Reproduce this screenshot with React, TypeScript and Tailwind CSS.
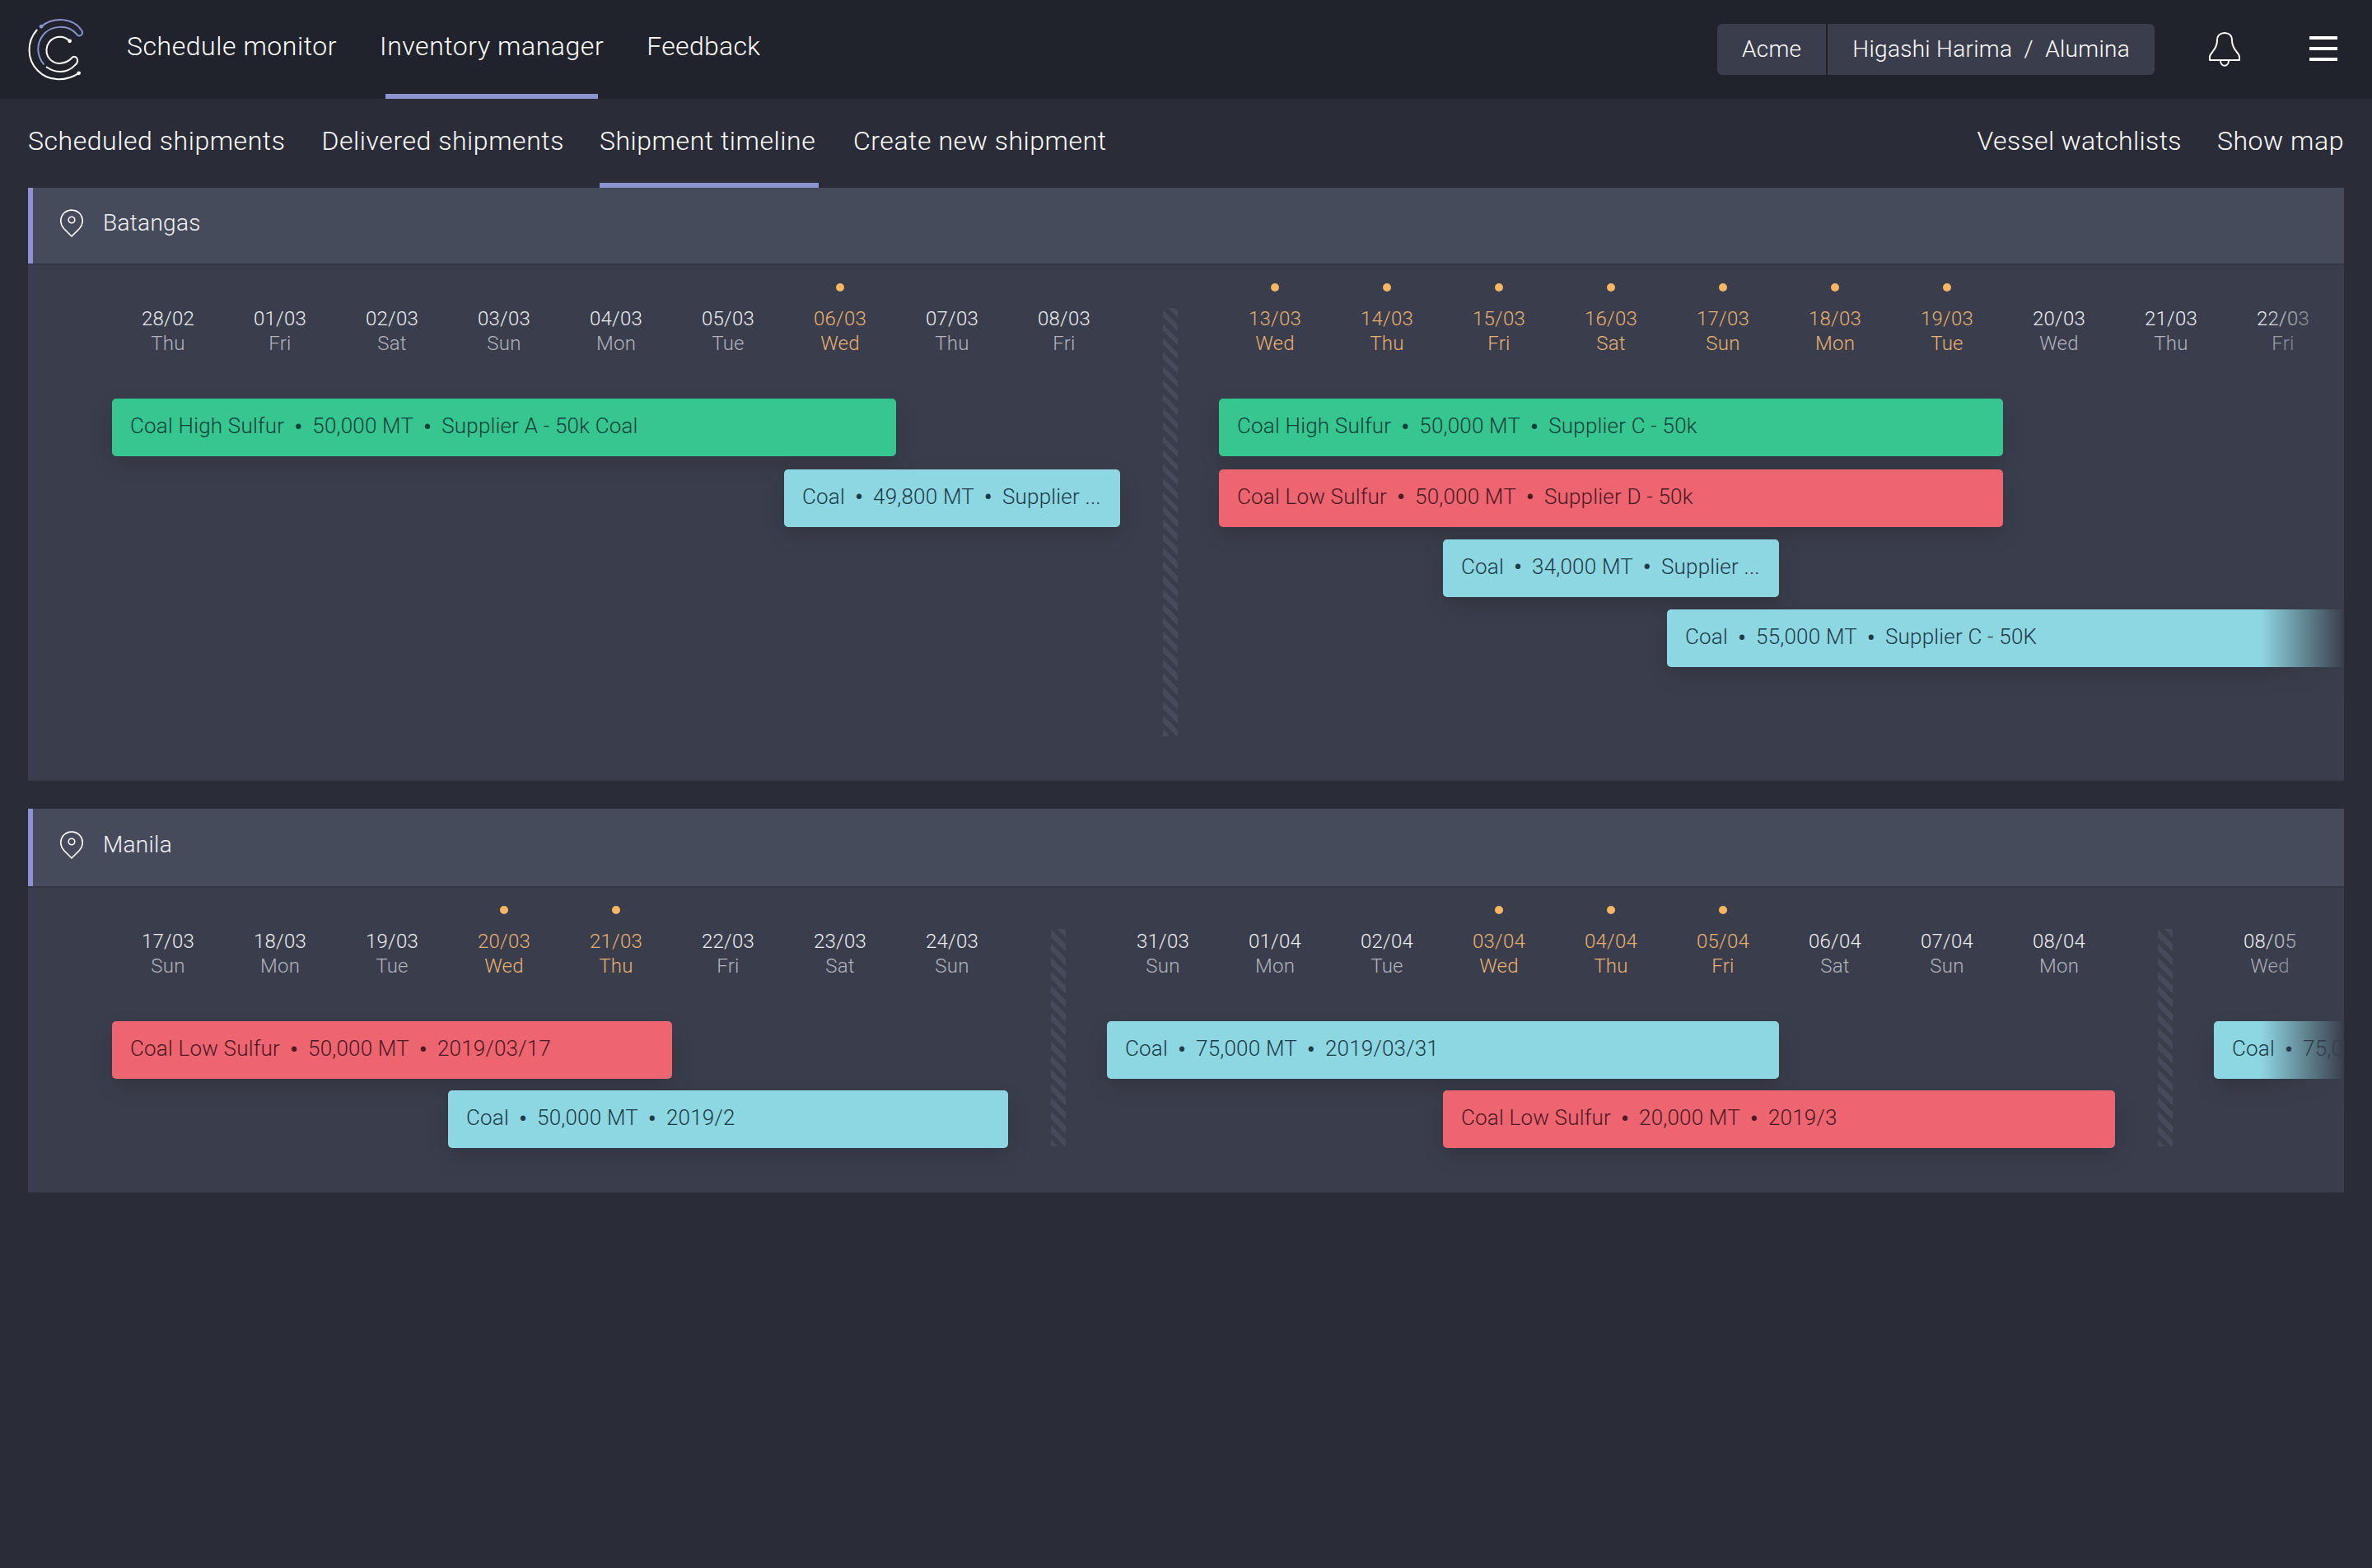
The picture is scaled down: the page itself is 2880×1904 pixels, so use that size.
import { Fragment } from "react"

type Day = { date: string; day: string; hot?: boolean }
type Bar = { text: string[]; color: "green" | "red" | "cyan"; col: number; span: number; row: number }
type Group = { days: Day[]; bars: Bar[] }

const barColors = {
  green: "bg-[#36c690] text-[#123f35]",
  red: "bg-[#ec6570] text-[#4d1821]",
  cyan: "bg-[#8dd7e2] text-[#1c3a48]",
}

const d = (date: string, day: string, hot?: boolean): Day => ({ date, day, hot })

const batangas: Group[] = [
  {
    days: [
      d("28/02", "Thu"),
      d("01/03", "Fri"),
      d("02/03", "Sat"),
      d("03/03", "Sun"),
      d("04/03", "Mon"),
      d("05/03", "Tue"),
      d("06/03", "Wed", true),
      d("07/03", "Thu"),
      d("08/03", "Fri"),
    ],
    bars: [
      { text: ["Coal High Sulfur", "50,000 MT", "Supplier A - 50k Coal"], color: "green", col: 0, span: 7, row: 0 },
      { text: ["Coal", "49,800 MT", "Supplier ..."], color: "cyan", col: 6, span: 3, row: 1 },
    ],
  },
  {
    days: [
      d("13/03", "Wed", true),
      d("14/03", "Thu", true),
      d("15/03", "Fri", true),
      d("16/03", "Sat", true),
      d("17/03", "Sun", true),
      d("18/03", "Mon", true),
      d("19/03", "Tue", true),
      d("20/03", "Wed"),
      d("21/03", "Thu"),
      d("22/03", "Fri"),
    ],
    bars: [
      { text: ["Coal High Sulfur", "50,000 MT", "Supplier C - 50k"], color: "green", col: 0, span: 7, row: 0 },
      { text: ["Coal Low Sulfur", "50,000 MT", "Supplier D - 50k"], color: "red", col: 0, span: 7, row: 1 },
      { text: ["Coal", "34,000 MT", "Supplier ..."], color: "cyan", col: 2, span: 3, row: 2 },
      { text: ["Coal", "55,000 MT", "Supplier C - 50K"], color: "cyan", col: 4, span: 7, row: 3 },
    ],
  },
]

const manila: Group[] = [
  {
    days: [
      d("17/03", "Sun"),
      d("18/03", "Mon"),
      d("19/03", "Tue"),
      d("20/03", "Wed", true),
      d("21/03", "Thu", true),
      d("22/03", "Fri"),
      d("23/03", "Sat"),
      d("24/03", "Sun"),
    ],
    bars: [
      { text: ["Coal Low Sulfur", "50,000 MT", "2019/03/17"], color: "red", col: 0, span: 5, row: 0 },
      { text: ["Coal", "50,000 MT", "2019/2"], color: "cyan", col: 3, span: 5, row: 1 },
    ],
  },
  {
    days: [
      d("31/03", "Sun"),
      d("01/04", "Mon"),
      d("02/04", "Tue"),
      d("03/04", "Wed", true),
      d("04/04", "Thu", true),
      d("05/04", "Fri", true),
      d("06/04", "Sat"),
      d("07/04", "Sun"),
      d("08/04", "Mon"),
    ],
    bars: [
      { text: ["Coal", "75,000 MT", "2019/03/31"], color: "cyan", col: 0, span: 6, row: 0 },
      { text: ["Coal Low Sulfur", "20,000 MT", "2019/3"], color: "red", col: 3, span: 6, row: 1 },
    ],
  },
  {
    days: [d("08/05", "Wed")],
    bars: [{ text: ["Coal", "75,000 MT"], color: "cyan", col: 0, span: 6, row: 0 }],
  },
]

function Logo() {
  return (
    <svg viewBox="100 65 210 230" className="w-[70px] h-[77px] shrink-0" fill="none" strokeLinecap="round">
      <path d="M132 108 C95 150 95 215 135 255 C175 298 240 295 285 265" stroke="#ffffff" strokeWidth="6" />
      <circle cx="285" cy="265" r="7" fill="#ffffff" />
      <path
        d="M148 95 C190 60 265 60 297 112 C302 128 285 135 276 122 C245 85 180 90 152 130 C128 165 135 205 157 232"
        stroke="#8c93d1"
        strokeWidth="6"
      />
      <circle cx="148" cy="95" r="7" fill="#8c93d1" />
      <path
        d="M252 148 C225 122 185 130 170 165 C158 205 190 235 225 228 C245 225 255 215 262 207 C275 198 290 220 272 235 C240 270 195 262 168 243"
        stroke="#ffffff"
        strokeWidth="6"
      />
      <circle cx="252" cy="148" r="7" fill="#ffffff" />
    </svg>
  )
}

function Bell() {
  return (
    <svg viewBox="0 0 38 42" className="w-[38px] h-[42px]" fill="none" stroke="#ffffff" strokeWidth="2">
      <path d="M1 34 L1 30 C1 25 10 22 10 10 C10 4 14 1 19 1 C24 1 28 4 28 10 C28 22 37 25 37 30 L37 34 Z" strokeLinejoin="round" />
      <path d="M14 34 C14 43 24 43 24 34" />
    </svg>
  )
}

function Pin() {
  return (
    <svg viewBox="0 0 28 34" className="w-[28px] h-[34px] shrink-0" fill="none" stroke="#ffffff" strokeWidth="1.6">
      <path d="M14 33 L4.5 23.5 C-0.5 18 -0.2 11 3.5 6 C9 -0.5 19 -0.5 24.5 6 C28.2 11 28.5 18 23.5 23.5 Z" strokeLinejoin="round" />
      <circle cx="14" cy="13" r="3.8" />
    </svg>
  )
}

function DayCell({ day }: { day: Day }) {
  return (
    <div className="flex flex-col items-center pt-[22px] tracking-[0.25px]">
      <div className={day.hot ? "w-[10px] h-[10px] rounded-full bg-[#f5b761]" : "w-[10px] h-[10px]"} />
      <div className={`mt-[18px] text-[24px] leading-[30px] ${day.hot ? "text-[#e8b071]" : "text-[#eceef2]"}`}>{day.date}</div>
      <div className={`text-[24px] leading-[30px] ${day.hot ? "text-[#e8b071]" : "text-[#b0b3bc]"}`}>{day.day}</div>
    </div>
  )
}

function TimelineBar({ bar }: { bar: Bar }) {
  return (
    <div
      className={`h-[70px] rounded-[5px] pl-[22px] pb-[3px] flex items-center overflow-hidden whitespace-nowrap text-[26px] tracking-[0.2px] shadow-[0_10px_26px_rgba(0,0,0,0.14)] ${barColors[bar.color]}`}
      style={{ gridColumn: `${bar.col + 1} / span ${bar.span}`, gridRow: bar.row + 2 }}
    >
      {bar.text.map((part, i) => (
        <Fragment key={i}>
          {i > 0 && <span className="w-[34px] shrink-0 text-center text-[34px] leading-none">•</span>}
          <span>{part}</span>
        </Fragment>
      ))}
    </div>
  )
}

type PanelProps = {
  name: string
  groups: Group[]
  headerClass: string
  bodyClass: string
  hatchClass: string
  gridClass: string
  dayRowClass: string
}

function Panel({ name, groups, headerClass, bodyClass, hatchClass, gridClass, dayRowClass }: PanelProps) {
  return (
    <section className="bg-[#3a3d4b]">
      <div className={`flex items-center gap-[24px] pl-[33px] pb-[6px] bg-[#464b5b] border-l-[6px] border-l-[#8c93d1] ${headerClass}`}>
        <Pin />
        <span className="text-[28px] tracking-[0.3px] text-[#f2f3f6]">{name}</span>
      </div>
      <div className="h-[2px] bg-[#343744]" />
      <div className={`relative flex overflow-hidden pl-[102px] ${bodyClass}`}>
        {groups.map((group, i) => (
          <Fragment key={i}>
            {i > 0 && (
              <div
                className={`w-[18px] shrink-0 ml-[52px] mr-[50px] bg-[repeating-linear-gradient(45deg,#464b5b_0,#464b5b_6px,transparent_6px,transparent_12px)] ${hatchClass}`}
              />
            )}
            <div className={`grid auto-cols-[136px] shrink-0 content-start ${gridClass}`}>
              {group.days.map((day, j) => (
                <div key={j} className={dayRowClass} style={{ gridColumn: j + 1, gridRow: 1 }}>
                  <DayCell day={day} />
                </div>
              ))}
              {group.bars.map((bar, j) => (
                <TimelineBar key={j} bar={bar} />
              ))}
            </div>
          </Fragment>
        ))}
        <div className="absolute top-0 bottom-0 right-0 w-[101px] bg-linear-to-r from-transparent to-[#3a3d4b]" />
      </div>
    </section>
  )
}

export default function App() {
  return (
    <div className="min-h-[1904px] bg-[#2a2c37] text-white font-['Roboto',sans-serif] font-light">
      <header className="h-[120px] bg-[#20232b] flex items-center pl-[34px] pr-[42px]">
        <Logo />
        <nav className="flex items-center h-full ml-[50px] text-[32px] tracking-[0.55px]">
          <span className="pb-[8px]">Schedule monitor</span>
          <span className="relative flex items-center h-full ml-[52px] pb-[8px]">
            Inventory manager
            <span className="absolute bottom-0 left-[7px] right-[7px] h-[6px] bg-[#8c93d1]" />
          </span>
          <span className="ml-[52px] pb-[8px] tracking-[0.3px]">Feedback</span>
        </nav>
        <div className="ml-auto flex items-center">
          <div className="flex h-[62px] rounded-[6px] bg-[#3a3d4b] text-[28px] tracking-[0.3px] overflow-hidden">
            <span className="flex items-center px-[30px] border-r-2 border-[#20232b]">Acme</span>
            <span className="flex items-center px-[30px]">Higashi Harima&nbsp;&nbsp;/&nbsp;&nbsp;Alumina</span>
          </div>
          <div className="ml-[66px]">
            <Bell />
          </div>
          <div className="ml-[84px] mb-[2px] flex flex-col gap-[9px] w-[34px]">
            <div className="h-[4px] bg-white" />
            <div className="h-[4px] bg-white" />
            <div className="h-[4px] bg-white" />
          </div>
        </div>
      </header>
      <nav className="h-[108px] flex items-center px-[34px] text-[32px] tracking-[0.55px]">
        <span className="pb-[7px]">Scheduled shipments</span>
        <span className="ml-[44px] pb-[7px]">Delivered shipments</span>
        <span className="relative flex items-center w-[266px] h-full ml-[43px] pb-[7px]">
          Shipment timeline
          <span className="absolute bottom-0 left-0 right-0 h-[6px] bg-[#8c93d1]" />
        </span>
        <span className="ml-[42px] pb-[7px]">Create new shipment</span>
        <span className="ml-auto pb-[7px] tracking-[0.35px]">Vessel watchlists</span>
        <span className="ml-[43px] pb-[7px]">Show map</span>
      </nav>
      <main className="flex flex-col gap-[34px] mx-[34px]">
        <Panel
          name="Batangas"
          groups={batangas}
          headerClass="h-[92px]"
          bodyClass="h-[626px]"
          hatchClass="mt-[52px] h-[520px]"
          gridClass="gap-y-[15.3px]"
          dayRowClass="h-[147px]"
        />
        <Panel
          name="Manila"
          groups={manila}
          headerClass="h-[94px]"
          bodyClass="h-[370px]"
          hatchClass="mt-[50px] h-[264px]"
          gridClass="gap-y-[14px]"
          dayRowClass="h-[148px]"
        />
      </main>
    </div>
  )
}
